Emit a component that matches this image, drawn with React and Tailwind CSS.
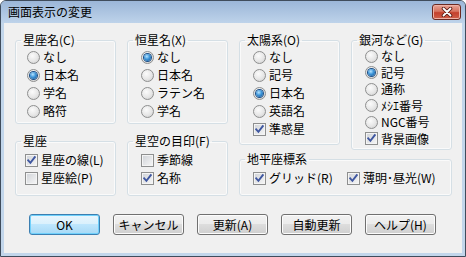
import React from 'react';

function Radio({ checked }) {
  return (
    <span className="w-[13px] h-[13px] shrink-0 rounded-full border border-[#8e8f8f] bg-[radial-gradient(circle_at_40%_35%,#fbfbfb,#e6e6e6_55%,#c9c9c9)] flex items-center justify-center">
      {checked && (
        <span className="w-[7px] h-[7px] rounded-full bg-[radial-gradient(circle_at_40%_35%,#b6e4ff,#3d95d9_45%,#12508f)] shadow-[0_0_0_1px_#1d4f86]" />
      )}
    </span>
  );
}

function Check({ checked }) {
  return (
    <span className="w-[13px] h-[13px] shrink-0 border border-[#8e8f8f] bg-gradient-to-br from-[#cfd2d7] to-[#f7f7f7] shadow-[inset_0_0_0_1px_#f4f4f4] flex items-center justify-center">
      {checked && (
        <svg width="11" height="11" viewBox="0 0 11 11">
          <path d="M2.2 5.4 L4.4 7.8 L8.8 2.2" fill="none" stroke="#3f57a0" strokeWidth="1.9" strokeLinecap="square" />
        </svg>
      )}
    </span>
  );
}

function Group({ label, className, children }) {
  return (
    <fieldset className={`border border-[#d5dfe5] rounded-[3px] shadow-[inset_0_0_0_1px_#fafafa] ${className}`}>
      <legend className="ml-[5px] px-[2px] leading-[16px]">{label}</legend>
      {children}
    </fieldset>
  );
}

function RadioRow({ label, checked, tall }) {
  return (
    <div className={`flex items-center gap-[3px] ${tall ? 'h-[18px]' : 'h-[16.5px]'}`}>
      <Radio checked={checked} />
      <span className="leading-[16px] whitespace-nowrap">{label}</span>
    </div>
  );
}

function CheckRow({ label, checked, tall = true, className = '' }) {
  return (
    <div className={`flex items-center gap-[3px] ${tall ? 'h-[18px]' : 'h-[16.5px]'} ${className}`}>
      <Check checked={checked} />
      <span className="leading-[16px] whitespace-nowrap">{label}</span>
    </div>
  );
}

function Button({ children, primary }) {
  return (
    <button
      className={
        primary
          ? 'w-[71px] h-[21px] rounded-[3px] border border-[#3c7fb1] bg-[linear-gradient(#eaf6fd,#d9f0fc_50%,#bee6fd_50%,#a7d9f5)] shadow-[inset_0_0_0_1px_#6fd0fb] leading-[16px]'
          : 'w-[71px] h-[21px] rounded-[3px] border border-[#707070] bg-[linear-gradient(#f2f2f2,#ebebeb_50%,#dddddd_50%,#cfcfcf)] shadow-[inset_0_0_0_1px_#fcfcfc] leading-[16px]'
      }
    >
      {children}
    </button>
  );
}

export default function App() {
  return (
    <div className="w-[466px] h-[257px] flex flex-col rounded-t-[6px] border border-[#3f4c5c] bg-[#c2d6eb] overflow-hidden text-[12px] text-black font-['Noto_Sans_CJK_JP','Noto_Sans',sans-serif]">
      {/* title bar */}
      <div className="h-[22px] shrink-0 flex items-center justify-between pl-[7px] pr-[4px] bg-gradient-to-b from-[#9bb6d8] to-[#bed3ea]">
        <span className="leading-[16px]">画面表示の変更</span>
        <div className="w-[29px] h-[16px] rounded-[3px] border border-[#6b2a22] bg-[linear-gradient(#e8a496,#d7735f_45%,#c4402c_55%,#d0604a)] shadow-[inset_0_0_0_1px_#eeb2a6] flex items-center justify-center">
          <svg width="14" height="10" viewBox="0 0 14 10">
            <path d="M3.5 1.5 L10.5 8.5 M10.5 1.5 L3.5 8.5" stroke="#5b1e16" strokeWidth="3.6" strokeLinecap="round" />
            <path d="M3.5 1.5 L10.5 8.5 M10.5 1.5 L3.5 8.5" stroke="#ffffff" strokeWidth="1.8" strokeLinecap="round" />
          </svg>
        </div>
      </div>

      {/* client area */}
      <div className="mx-[3px] mb-[3px] flex-1 bg-[#f0f0f0] pt-[9px] pl-[11px] flex flex-col">
        <div className="flex items-start gap-[11px]">
          {/* column 1 */}
          <div className="flex flex-col">
            <Group label="星座名(C)" className="w-[101px]">
              <div className="pl-[11px] pb-[3px]">
                <RadioRow tall label="なし" />
                <RadioRow tall label="日本名" checked />
                <RadioRow tall label="学名" />
                <RadioRow tall label="略符" />
              </div>
            </Group>
            <Group label="星座" className="w-[101px] mt-[9px]">
              <div className="pl-[9px] pt-[2px] pb-[8px]">
                <CheckRow label="星座の線(L)" checked />
                <CheckRow label="星座絵(P)" />
              </div>
            </Group>
          </div>

          {/* column 2 */}
          <div className="flex flex-col">
            <Group label="恒星名(X)" className="w-[101px]">
              <div className="pl-[13px] pb-[3px]">
                <RadioRow tall label="なし" checked />
                <RadioRow tall label="日本名" />
                <RadioRow tall label="ラテン名" />
                <RadioRow tall label="学名" />
              </div>
            </Group>
            <Group label="星空の目印(F)" className="w-[101px] mt-[9px]">
              <div className="pl-[13px] pt-[2px] pb-[8px]">
                <CheckRow label="季節線" />
                <CheckRow label="名称" checked />
              </div>
            </Group>
          </div>

          {/* right side */}
          <div className="w-[213px] flex flex-col">
            <div className="flex items-start gap-[11px]">
              <Group label="太陽系(O)" className="w-[101px]">
                <div className="pl-[13px] pb-[6px]">
                  <RadioRow tall label="なし" />
                  <RadioRow tall label="記号" />
                  <RadioRow tall label="日本名" checked />
                  <RadioRow tall label="英語名" />
                  <CheckRow label="準惑星" checked />
                </div>
              </Group>
              <Group label="銀河など(G)" className="w-[101px]">
                <div className="pl-[13px] pb-[2px]">
                  <RadioRow label="なし" />
                  <RadioRow label="記号" checked />
                  <RadioRow label="通称" />
                  <RadioRow label="ﾒｼｴ番号" />
                  <RadioRow label="NGC番号" />
                  <CheckRow tall={false} label="背景画像" checked />
                </div>
              </Group>
            </div>
            <Group label="地平座標系" className="w-[213px] mt-[1px]">
              <div className="pl-[13px] pt-[2px] pb-[8px] flex">
                <CheckRow label="グリッド(R)" checked className="w-[94px]" />
                <CheckRow label="薄明･昼光(W)" checked />
              </div>
            </Group>
          </div>
        </div>

        {/* buttons */}
        <div className="mt-[18px] ml-[14px] flex gap-[13px]">
          <Button primary>OK</Button>
          <Button>キャンセル</Button>
          <Button>更新(A)</Button>
          <Button>自動更新</Button>
          <Button>ヘルプ(H)</Button>
        </div>
      </div>
    </div>
  );
}
